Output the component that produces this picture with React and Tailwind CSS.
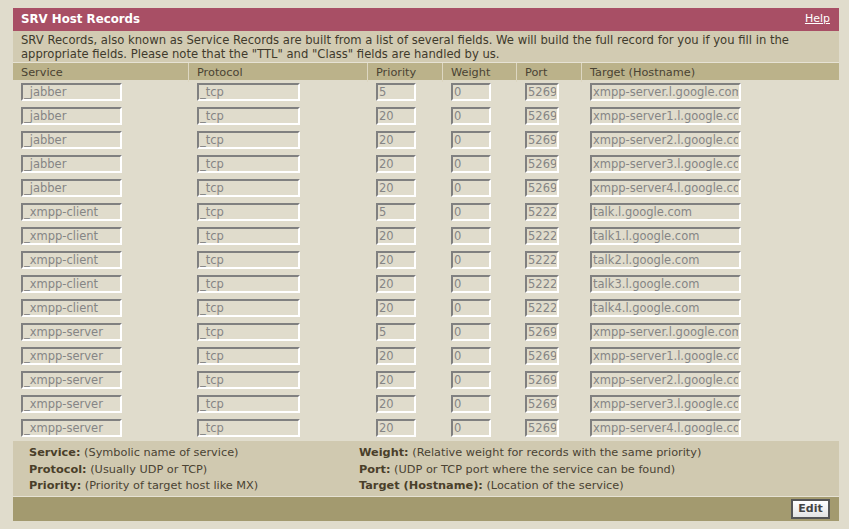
import React from "react";

const rows = [
  ["_jabber", "_tcp", "5", "0", "5269", "xmpp-server.l.google.com"],
  ["_jabber", "_tcp", "20", "0", "5269", "xmpp-server1.l.google.com"],
  ["_jabber", "_tcp", "20", "0", "5269", "xmpp-server2.l.google.com"],
  ["_jabber", "_tcp", "20", "0", "5269", "xmpp-server3.l.google.com"],
  ["_jabber", "_tcp", "20", "0", "5269", "xmpp-server4.l.google.com"],
  ["_xmpp-client", "_tcp", "5", "0", "5222", "talk.l.google.com"],
  ["_xmpp-client", "_tcp", "20", "0", "5222", "talk1.l.google.com"],
  ["_xmpp-client", "_tcp", "20", "0", "5222", "talk2.l.google.com"],
  ["_xmpp-client", "_tcp", "20", "0", "5222", "talk3.l.google.com"],
  ["_xmpp-client", "_tcp", "20", "0", "5222", "talk4.l.google.com"],
  ["_xmpp-server", "_tcp", "5", "0", "5269", "xmpp-server.l.google.com"],
  ["_xmpp-server", "_tcp", "20", "0", "5269", "xmpp-server1.l.google.com"],
  ["_xmpp-server", "_tcp", "20", "0", "5269", "xmpp-server2.l.google.com"],
  ["_xmpp-server", "_tcp", "20", "0", "5269", "xmpp-server3.l.google.com"],
  ["_xmpp-server", "_tcp", "20", "0", "5269", "xmpp-server4.l.google.com"],
];

const widths = ["w-[101px]", "w-[103px]", "w-[40px]", "w-[40px]", "w-[34px]", "w-[151px]"];
const cols = "grid grid-cols-[175px_179px_75px_74px_65px_258px]";

function Field({ value, w }) {
  return (
    <input
      readOnly
      value={value}
      className={`${w} h-[18px] box-border border-2 border-t-[#808080] border-l-[#808080] border-b-white border-r-white bg-[#e0dccc] text-[#858585] text-[11.5px] px-[1px] py-0 outline-none`}
      style={{ fontFamily: '"DejaVu Sans", Verdana, sans-serif' }}
    />
  );
}

export default function App() {
  const headers = ["Service", "Protocol", "Priority", "Weight", "Port", "Target (Hostname)"];
  return (
    <div
      className="w-[849px] h-[529px] bg-[#e0dccc] pt-[8px] pl-[13px] overflow-hidden"
      style={{ fontFamily: '"DejaVu Sans", Verdana, sans-serif' }}
    >
      <div className="w-[826px]">
        <div className="h-[23px] bg-[#a84f65] flex items-center justify-between pl-[8px] pr-[9px]">
          <span className="text-white font-bold text-[11.8px]">SRV Host Records</span>
          <a className="text-white underline text-[11px]">Help</a>
        </div>
        <div className="h-[32px] bg-[#d2cbb2] border-b border-[#e6e2d4] pl-[8px] pr-[10px] pt-[2px] text-[11.6px] leading-[14px] text-[#3f3a2c]">
          SRV Records, also known as Service Records are built from a list of several fields. We will build the full record for you if you fill in the appropriate fields. Please note that the "TTL" and "Class" fields are handled by us.
        </div>
        <div className={`${cols} h-[17px] bg-[#bbb28a] text-[11.3px] text-[#4a4333]`}>
          {headers.map((h, i) => (
            <div
              key={h}
              className={`flex items-center pt-[2px] ${i === 0 ? "pl-[8px]" : "pl-[8px] border-l border-[#ddd7c2]"}`}
            >
              {h}
            </div>
          ))}
        </div>
        <div>
          {rows.map((r, ri) => (
            <div key={ri} className={`${cols} h-[24px]`}>
              {r.map((v, ci) => (
                <div key={ci} className={`flex items-center ${ci === 0 ? "pl-[8px]" : "pl-[9px]"}`}>
                  <Field value={v} w={widths[ci]} />
                </div>
              ))}
            </div>
          ))}
        </div>
        <div className="mt-[1px] h-[56px] bg-[#d0c9b0] border-b border-[#e6e2d4] pl-[16px] pt-[4px] grid grid-cols-[330px_1fr] text-[11.3px] leading-[16.5px] text-[#4a4333]">
          <div>
            <div><b className="text-[#4a3f2a]">Service:</b> (Symbolic name of service)</div>
            <div><b className="text-[#4a3f2a]">Protocol:</b> (Usually UDP or TCP)</div>
            <div><b className="text-[#4a3f2a]">Priority:</b> (Priority of target host like MX)</div>
          </div>
          <div>
            <div><b className="text-[#4a3f2a]">Weight:</b> (Relative weight for records with the same priority)</div>
            <div><b className="text-[#4a3f2a]">Port:</b> (UDP or TCP port where the service can be found)</div>
            <div><b className="text-[#4a3f2a]">Target (Hostname):</b> (Location of the service)</div>
          </div>
        </div>
        <div className="h-[24px] bg-[#a39a6f] flex items-center justify-end pr-[9px]">
          <button className="w-[39px] h-[20px] border-2 border-[#555] bg-gradient-to-b from-white to-[#e4e4e4] text-[11px] font-bold text-[#444] flex items-center justify-center">
            Edit
          </button>
        </div>
      </div>
    </div>
  );
}
